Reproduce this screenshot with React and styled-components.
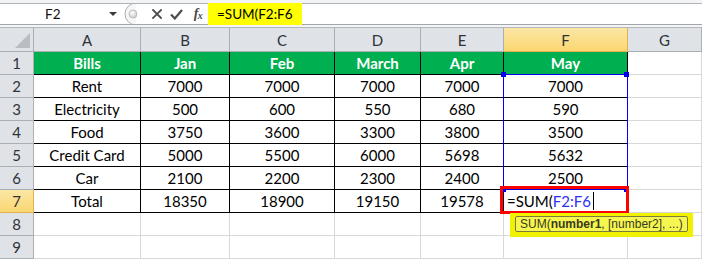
import React from 'react';
import styled, { createGlobalStyle, css } from 'styled-components';

const Global = createGlobalStyle`
  html, body { margin: 0; padding: 0; background: #fff; }
  body { width: 702px; height: 259px; overflow: hidden; font-family: Lato, "Liberation Sans", sans-serif; }
`;

const Window = styled.div`
  width: 702px;
  height: 259px;
  display: flex;
  flex-direction: column;
  background: #fff;
  overflow: hidden;
`;

const FormulaBar = styled.div`
  height: 28px;
  box-sizing: border-box;
  padding: 3px 0 2px;
  background: #f3f4f6;
  border-bottom: 1px solid #b4b8bd;
  display: flex;
`;

const BarInner = styled.div`
  flex: 1;
  display: flex;
  align-items: center;
  background: #fff;
  border-top: 1px solid #b0b4b9;
  border-bottom: 1px solid #a2a6ab;
`;

const NameBox = styled.div`
  width: 122px;
  height: 100%;
  display: flex;
  align-items: center;
  padding-left: 45px;
  box-sizing: border-box;
  font-size: 13.5px;
  color: #111;
`;

const DropArrow = styled.span`
  margin-left: auto;
  margin-right: 5px;
  width: 0;
  height: 0;
  border-left: 4px solid transparent;
  border-right: 4px solid transparent;
  border-top: 4px solid #3a3a3a;
`;

const Splitter = styled.svg`
  width: 20px;
  height: 20px;
  flex: none;
`;

const IconSlot = styled.span`
  display: flex;
  align-items: center;
  justify-content: center;
  margin-left: ${p => p.$gap}px;
  width: ${p => p.$w}px;
  height: 100%;
`;

const Fx = styled.span`
  font-family: "Liberation Serif", "DejaVu Serif", serif;
  font-style: italic;
  font-weight: bold;
  font-size: 14px;
  color: #4a4a4a;
  letter-spacing: -0.5px;
  sub { font-size: 10px; vertical-align: -1px; }
`;

const FormulaInput = styled.div`
  flex: 1;
  height: calc(100% + 2px);
  margin: -1px 0;
  display: flex;
  align-items: stretch;
  padding-left: 4px;
`;

const Highlight = styled.span`
  display: flex;
  align-items: center;
  background: #ffff00;
  padding: 0 9px;
  font-size: 13.5px;
  color: #000;
`;

const Sheet = styled.div`
  position: relative;
  display: grid;
  grid-template-columns: 34px 107px 89px 105px 86px 83px 124px 74px;
  grid-template-rows: 24px repeat(9, 23px);
`;

const HeadCell = styled.div`
  box-sizing: border-box;
  display: flex;
  align-items: center;
  justify-content: center;
  border-right: 1px solid #abafb4;
  border-bottom: 1px solid #abafb4;
  background: #dfe2e7;
  color: #2f3338;
  font-size: 15px;
  ${p => p.$active && css`
    background: linear-gradient(#fbe6a4, #fbd772);
    border-right-color: #e2b24e;
    border-bottom-color: #e2b24e;
  `}
`;

const Corner = styled(HeadCell)`
  position: relative;
  &::after {
    content: '';
    position: absolute;
    right: 3px;
    bottom: 3px;
    width: 0;
    height: 0;
    border-left: 15px solid transparent;
    border-bottom: 15px solid #b9bdc2;
  }
`;

const Cell = styled.div`
  box-sizing: border-box;
  display: flex;
  align-items: center;
  justify-content: ${p => (p.$left ? 'flex-start' : 'center')};
  padding-left: ${p => (p.$left ? '3px' : '0')};
  border-right: 1px solid ${p => (p.$table ? '#000' : '#d8d8d8')};
  border-bottom: 1px solid ${p => (p.$table ? '#000' : '#d8d8d8')};
  font-size: 15px;
  color: #000;
  white-space: nowrap;
  ${p => p.$green && css`
    background: #00b050;
    color: #fff;
    font-weight: bold;
  `}
`;

const RefText = styled.span`
  color: #3030f0;
`;

const Caret = styled.span`
  display: inline-block;
  width: 1px;
  height: 18px;
  background: #000;
  margin-left: 2px;
`;

const RangeBox = styled.div`
  position: absolute;
  left: 503px;
  top: 46px;
  width: 125px;
  height: 116px;
  box-sizing: border-box;
  border: 1px solid #0000ee;
  pointer-events: none;
`;

const Handle = styled.div`
  position: absolute;
  width: 5px;
  height: 5px;
  background: #0000ee;
  left: ${p => p.$x}px;
  top: ${p => p.$y}px;
`;

const RedBox = styled.div`
  position: absolute;
  left: 500px;
  top: 158px;
  width: 129px;
  height: 28px;
  box-sizing: border-box;
  border: 3px solid #ff0000;
`;

const TipGlow = styled.div`
  position: absolute;
  left: 510px;
  top: 185px;
  width: 183px;
  height: 24px;
  background: #f2f200;
`;

const Tooltip = styled.div`
  position: absolute;
  left: 515px;
  top: 188px;
  height: 16px;
  box-sizing: border-box;
  padding: 0 4px;
  display: flex;
  align-items: center;
  border: 1px solid #7a7a40;
  border-radius: 2px;
  background: #f6f650;
  font-family: "Liberation Sans", Arial, sans-serif;
  font-size: 12px;
  color: #3a3a20;
  white-space: nowrap;
  b { font-weight: bold; }
`;

const cols = ['A', 'B', 'C', 'D', 'E', 'F', 'G'];
const data = [
  ['Bills', 'Jan', 'Feb', 'March', 'Apr', 'May'],
  ['Rent', '7000', '7000', '7000', '7000', '7000'],
  ['Electricity', '500', '600', '550', '680', '590'],
  ['Food', '3750', '3600', '3300', '3800', '3500'],
  ['Credit Card', '5000', '5500', '6000', '5698', '5632'],
  ['Car', '2100', '2200', '2300', '2400', '2500'],
  ['Total', '18350', '18900', '19150', '19578', null],
  null,
  null,
];

export default function App() {
  return (
    <Window>
      <Global />
      <FormulaBar>
        <BarInner>
          <NameBox>
            F2
            <DropArrow />
          </NameBox>
          <Splitter viewBox="0 0 20 20">
            <path d="M14 -1 A10.5 10.5 0 0 0 14 21" fill="#f6f6f6" stroke="#a9adb2" strokeWidth="1" />
            <defs>
              <radialGradient id="dot" cx="0.4" cy="0.35" r="0.7">
                <stop offset="0" stopColor="#ffffff" />
                <stop offset="1" stopColor="#c4c6c9" />
              </radialGradient>
            </defs>
            <circle cx="11" cy="10" r="4" fill="url(#dot)" stroke="#b3b6ba" strokeWidth="0.8" />
          </Splitter>
          <IconSlot $gap={10} $w={10}>
            <svg width="10" height="10" viewBox="0 0 10 10">
              <path d="M1 1 L9 9 M9 1 L1 9" stroke="#4d4d4d" strokeWidth="1.8" strokeLinecap="square" />
            </svg>
          </IconSlot>
          <IconSlot $gap={8} $w={13}>
            <svg width="13" height="11" viewBox="0 0 13 11">
              <path d="M1 5.5 L4.8 9.5 L12 1" fill="none" stroke="#4d4d4d" strokeWidth="2.2" />
            </svg>
          </IconSlot>
          <IconSlot $gap={9} $w={12}>
            <Fx>f<sub>x</sub></Fx>
          </IconSlot>
          <FormulaInput>
            <Highlight>=SUM(F2:F6</Highlight>
          </FormulaInput>
        </BarInner>
      </FormulaBar>

      <Sheet>
        <Corner />
        {cols.map(c => (
          <HeadCell key={c} $active={c === 'F'}>{c}</HeadCell>
        ))}
        {data.map((row, r) => (
          <React.Fragment key={r}>
            <HeadCell $active={r === 6}>{r + 1}</HeadCell>
            {cols.map((c, ci) => {
              if (!row || ci === 6) return <Cell key={c} />;
              if (r === 6 && ci === 5) {
                return (
                  <Cell key={c} $table $left>
                    =SUM(<RefText>F2:F6</RefText>
                    <Caret />
                  </Cell>
                );
              }
              return (
                <Cell key={c} $table $green={r === 0}>
                  {row[ci]}
                </Cell>
              );
            })}
          </React.Fragment>
        ))}
        <RangeBox />
        <Handle $x={501} $y={44} />
        <Handle $x={624} $y={44} />
        <Handle $x={501} $y={159} />
        <Handle $x={624} $y={159} />
        <RedBox />
        <TipGlow />
        <Tooltip>
          SUM(<b>number1</b>, [number2], ...)
        </Tooltip>
      </Sheet>
    </Window>
  );
}
